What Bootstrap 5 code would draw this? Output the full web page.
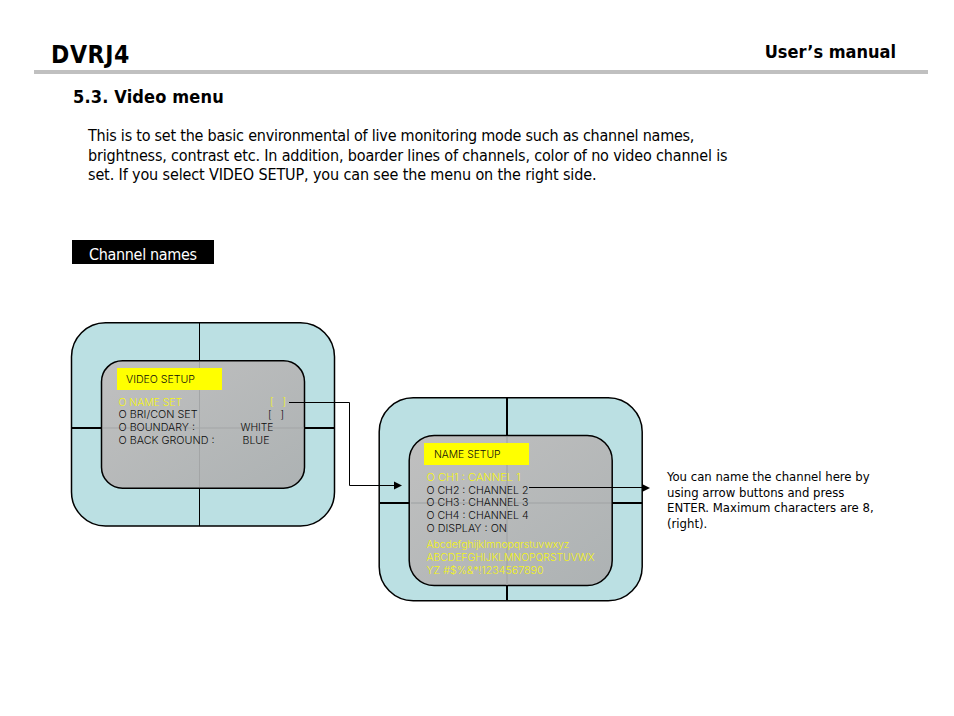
<!DOCTYPE html>
<html lang="en">
<head>
<meta charset="utf-8">
<meta name="viewport" content="width=device-width, initial-scale=1">
<title>DVRJ4 User’s manual</title>
<link href="https://cdn.jsdelivr.net/npm/bootstrap@5.3.0/dist/css/bootstrap.min.css" rel="stylesheet">
<style>
body{font-family:"DejaVu Sans Condensed","DejaVu Sans",sans-serif;font-stretch:condensed;color:#000;width:954px;height:716px}
.masthead{height:74px;margin:0 26px 0 34px;padding:0 32px 0 17px;border-bottom:4px solid silver}
.brand{font-size:24.5px;line-height:30px;padding-top:40px;letter-spacing:.6px}
.doc{font-size:18px;line-height:24px;padding-top:40px}
.section-title{font-size:18px;line-height:24px;padding:11px 0 0 73px;letter-spacing:.16px}
.intro{font-size:16px;line-height:19.5px;padding:17px 0 0 88px;height:131px}
.l1{letter-spacing:-.225px}
.l2{letter-spacing:-.168px}
.l3{letter-spacing:-.125px}
.topic{width:142px;height:24px;margin-left:72px;padding-left:17px;font-size:16px;line-height:29px;letter-spacing:-.33px}
.stage{height:320px;margin-top:36px}
.stage svg{display:block}
.osd{font-family:Inter,"Liberation Sans",sans-serif;font-weight:300;font-size:10.3px;fill:#0c0c0c}
.osd .hot{fill:#f4f414}
.note{font-size:13px;line-height:15.6px;left:667px;top:169px;width:230px}
</style>
<script src="https://cdn.jsdelivr.net/npm/bootstrap@5.3.0/dist/js/bootstrap.bundle.min.js"></script>
</head>
<body class="bg-white overflow-hidden">
<header class="masthead d-flex justify-content-between">
  <h1 class="brand fw-bold m-0">DVRJ4</h1>
  <div class="doc fw-bold">User’s manual</div>
</header>
<main>
  <h2 class="section-title fw-bold m-0">5.3. Video menu</h2>
  <p class="intro m-0 text-nowrap"><span class="l1">This is to set the basic environmental of live monitoring mode such as channel names,</span><br><span class="l2">brightness, contrast etc. In addition, boarder lines of channels, color of no video channel is</span><br><span class="l3">set. If you select VIDEO SETUP, you can see the menu on the right side.</span></p>
  <div class="topic bg-black text-white text-nowrap">Channel names</div>
  <section class="stage position-relative">
    <svg width="954" height="320" viewBox="0 300 954 320">
      <defs>
        <linearGradient id="glass" x1="0" y1="0" x2="1" y2="1">
          <stop offset="0" stop-color="#c0c0c0"/><stop offset="1" stop-color="#adb2b3"/>
        </linearGradient>
      </defs>
      <!-- video setup screen -->
      <g fill="none" stroke="#000" stroke-width="1.5">
        <rect x="71.5" y="322.7" width="263" height="203.2" rx="34" fill="#bbe0e3"/>
        <path d="M199.5 323V526" stroke-width="1"/>
        <path d="M72 428H335" stroke-width="2"/>
        <rect x="101.5" y="360.7" width="203" height="127.5" rx="21" fill="url(#glass)"/>
        <path d="M199.5 362V487M103 428H304" stroke="#a3a5a6" stroke-width="1"/>
      </g>
      <rect x="117" y="368" width="105" height="22" fill="#ff0"/>
      <g class="osd">
        <text x="126" y="383" textLength="69" lengthAdjust="spacingAndGlyphs">VIDEO SETUP</text>
        <g class="hot">
          <text x="118.5" y="406" textLength="63.5" lengthAdjust="spacingAndGlyphs">O NAME SET</text>
          <text x="270" y="405">[</text><text x="282.5" y="405">]</text>
        </g>
        <text x="118.5" y="418" textLength="79" lengthAdjust="spacingAndGlyphs">O BRI/CON SET</text>
        <text x="268" y="417.5">[</text><text x="280.5" y="417.5">]</text>
        <text x="118.5" y="431" textLength="76.5" lengthAdjust="spacingAndGlyphs">O BOUNDARY :</text>
        <text x="240.5" y="431" textLength="33" lengthAdjust="spacingAndGlyphs">WHITE</text>
        <text x="118.5" y="444" textLength="96" lengthAdjust="spacingAndGlyphs">O BACK GROUND :</text>
        <text x="242.5" y="444" textLength="27" lengthAdjust="spacingAndGlyphs">BLUE</text>
      </g>
      <!-- name setup screen -->
      <g fill="none" stroke="#000" stroke-width="1.5">
        <rect x="379.2" y="397.7" width="263" height="203" rx="34" fill="#bbe0e3"/>
        <path d="M507 398V600M380 503H642" stroke-width="2"/>
        <rect x="409.2" y="435.5" width="203" height="150" rx="25" fill="url(#glass)"/>
        <path d="M507 437V585M411 503H611" stroke="#a7a9aa" stroke-width="1.5"/>
      </g>
      <rect x="424" y="443" width="105" height="22" fill="#ff0"/>
      <g class="osd">
        <text x="434" y="458" textLength="66.5" lengthAdjust="spacingAndGlyphs">NAME SETUP</text>
        <text class="hot" x="426.5" y="481" textLength="94" lengthAdjust="spacingAndGlyphs">O CH1 : CANNEL 1</text>
        <text x="426.5" y="494" textLength="102" lengthAdjust="spacingAndGlyphs">O CH2 : CHANNEL 2</text>
        <text x="426.5" y="506" textLength="102" lengthAdjust="spacingAndGlyphs">O CH3 : CHANNEL 3</text>
        <text x="426.5" y="519" textLength="102" lengthAdjust="spacingAndGlyphs">O CH4 : CHANNEL 4</text>
        <text x="426.5" y="532" textLength="80.5" lengthAdjust="spacingAndGlyphs">O DISPLAY : ON</text>
        <g class="hot">
          <text x="426.5" y="548" textLength="143" lengthAdjust="spacingAndGlyphs">Abcdefghijklmnopqrstuvwxyz</text>
          <text x="426.5" y="561" textLength="168" lengthAdjust="spacingAndGlyphs">ABCDEFGHIJKLMNOPQRSTUVWX</text>
          <text x="426.5" y="574" textLength="117" lengthAdjust="spacingAndGlyphs">YZ #$%&amp;*!1234567890</text>
        </g>
      </g>
      <!-- connectors -->
      <path d="M289 402.5H349.5V485.5H395M529 487.5H643" fill="none" stroke="#000"/>
      <path d="M394 481.5L402 485.5L394 489.5ZM642 484L650 488L642 492Z"/>
    </svg>
    <div class="note position-absolute text-nowrap">You can name the channel here by<br>using arrow buttons and press<br>ENTER. Maximum characters are 8,<br>(right).</div>
  </section>
</main>
</body>
</html>
